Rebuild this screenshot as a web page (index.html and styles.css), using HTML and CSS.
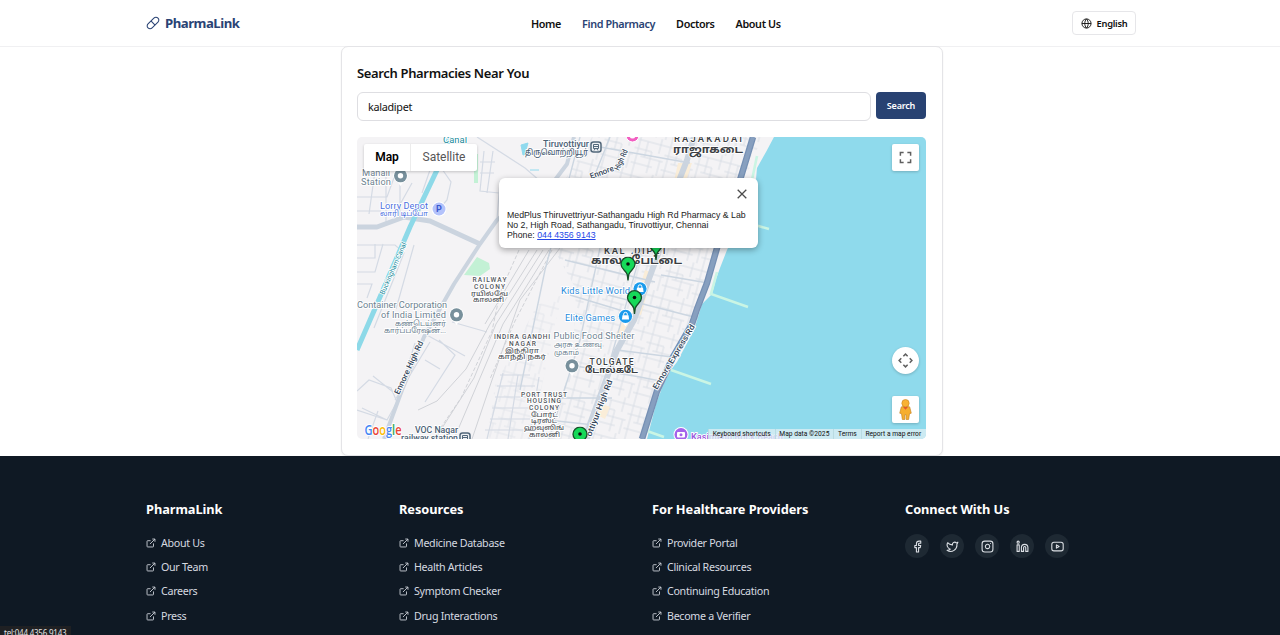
FILE: index.html
```html
<!DOCTYPE html>
<html lang="en">
<head>
<meta charset="utf-8">
<title>PharmaLink</title>
<link rel="stylesheet" href="styles.css">
</head>
<body>
<svg width="0" height="0" class="defs">
  <symbol id="ext" viewBox="0 0 24 24"><path d="M18 13v7a1.500 1.500 0 0 1-1.500 1.500H4A1.500 1.500 0 0 1 2.500 20V8A1.500 1.500 0 0 1 4 6.500h7M15 2.500h6.500V9M9.500 14.500l12-12"/></symbol>
  <symbol id="pin" viewBox="0 0 16 25"><path d="M8 24 7.200 18C6 14 1 12.500 1 7.700a7 7 0 0 1 14 0C15 12.500 10 14 8.800 18z" fill="#16d959" stroke="#174f29" stroke-width="1.300"/><circle cx="8" cy="7.500" r="1.800" fill="#0b0b0b"/></symbol>
  <symbol id="dot" viewBox="0 0 16 19"><path d="M8 18 5.500 14.500A7.300 7.300 0 1 1 10.500 14.500z" fill="#fff"/><circle cx="8" cy="7.800" r="6.500" fill="#78909c"/><circle cx="8" cy="7.800" r="2.700" fill="#fff"/></symbol>
  <symbol id="bag" viewBox="0 0 16 19"><path d="M8 18 5.500 14.500A7.300 7.300 0 1 1 10.500 14.500z" fill="#fff"/><circle cx="8" cy="7.800" r="6.600" fill="#1a9bec"/><path d="M5 6.800h6l.6 4.200H4.400z" fill="#fff"/><path d="M6.200 7V5.600a1.800 1.800 0 0 1 3.600 0V7" fill="none" stroke="#fff"/></symbol>
  <symbol id="train" viewBox="0 0 12 12"><rect x="1" y="1" width="10" height="10" rx="2.500" fill="#eef1f4" stroke="#52677a" stroke-width="1.500"/><path d="M3.500 3.500h5v4h-5zM3.500 5.500h5M4 9.500l1-1.500M8 9.500 7 8" fill="none" stroke="#52677a"/></symbol>
</svg>

<header class="header">
  <div class="container bar">
    <a class="brand"><svg class="pill" viewBox="0 0 24 24"><path d="m10.500 20.500 10-10a4.950 4.950 0 1 0-7-7l-10 10a4.950 4.950 0 1 0 7 7Z"/><path d="m8.500 8.500 7 7"/></svg><span>PharmaLink</span></a>
    <nav class="nav"><a>Home</a><a class="active">Find Pharmacy</a><a>Doctors</a><a>About Us</a></nav>
    <button class="lang"><svg viewBox="0 0 24 24"><circle cx="12" cy="12" r="10"/><path d="M2 12h20M12 2c-5 5-5 15 0 20M12 2c5 5 5 15 0 20"/></svg><span>English</span></button>
  </div>
</header>

<main class="card">
  <h1>Search Pharmacies Near You</h1>
  <div class="search"><div class="field">kaladipet</div><button class="go">Search</button></div>
  <section class="map">
    <svg class="tiles" viewBox="357 137 569 302">
      <defs>
        <pattern id="streets" width="31" height="37" patternUnits="userSpaceOnUse" patternTransform="rotate(15)">
          <path d="M0 6h31M0 15h18M8 22h23M0 30h22M4 0v37M12 6v16M18 15v22M25 0v15M28 22v15" fill="none" stroke="#d7dde4" stroke-width=".9"/>
        </pattern>
      </defs>
      <rect x="357" y="137" width="569" height="302" fill="#f4f3f5"/>
      <path d="M592 137h170l-20 50-30 80-18 50-36 60-20 62h-90l25-80 3-70-25-45 5-50z" fill="url(#streets)"/>
      <path d="M537 305l25-10-20 90-10 54h-45l8-54z" fill="url(#streets)" opacity=".65"/>
      <g fill="#faedd8"><path d="M678 163h14l-6 18h-12zM645 270l8 3-12 42-9-2zM600 403l10 4-5 12-10-5zM625 318l5 2-9 17-6-2z"/></g>
      <path d="M464 275 477 257 489 263 490 269 480 276Z M474 154h4v29h-4z" fill="#c3f1d5"/>
      <path d="M521 145l7-2-2 7 5 2-8 3zM530 170h9" fill="#90daee" stroke="#90daee"/>
      <g class="minor">
        <path d="M357 245h38l9 8-30 75M357 272h18l8-28M357 258h18v-14M357 284h15l-5 14M414 245l-18 64M357 197h30l8-22M375 171l-6 43M386 171v52M400 182v34M412 183l-14 25M357 211h24M430 170l-8 23M442 169l9 13-4 18-6 7M477 137l48 31 15 13M484 151l-4 40 19 2M493 151l-6 42M480 162h15M480 173h14M500 181l-3 38"/>
        <path d="M425 334 465 356M415 343l-17 55M430 342l-35 58M439 340l16 15-30 47M425 360l15 9M357 391l12-11 22 8 6 14-10 18-25-12M357 410l30 10M368 439l10-28M373 376l20 16M452 322l35 10M500 375h30M497 386h38M495 397h38M492 408h40M490 419h40M485 430h40M503 373l-16 66M518 375l-10 64M539 377l-10 62"/>
      </g>
      <g class="rail"><path d="M537 250 490 324 466 369 437 401 418 410M543 250 496 324 474 378 435 439M549 250 503 324 454 439M560 248 520 300 492 380 472 439M529 250 485 324"/><path d="M519 250 500 293 492 331 461 398 433 439M552 250 515 321 490 379" stroke-dasharray="4 2"/></g>
      <g class="mid"><path d="M580 137 545 270 520 390M600 248 580 340 549 439M610 137 594 177M565 260 655 282M570 295 633 314M608 295 725 325M570 365 640 377 665 382M617 350 672 357M665 183 727 196M600 147 690 163M661 275 708 283M560 398h52M548 420l46 5M652 200 642 248 588 439"/></g>
      <path class="road" stroke-width="5" d="M357 227h20l27-10 26 4 50 23"/>
      <path class="road" stroke-width="4" d="M574 137 567 164 555 180 524 197 497 220 480 244 454 284 424 337 402 390 384 439"/>
      <path class="road" stroke-width="6" d="M694 137 687 160 680 178 657 257 647 284 634 320 617 350 590 424 587 439"/>
      <path d="M450 137 437 170 410 227 377 304 357 350" stroke="#8dd9e8" stroke-width="5" fill="none"/>
      <path d="M774 137 766 152 757 168 755 190 742 220 727 250 720 268 716 279 712 294 702 304 694 330 677 362 670 371 662 388 656 404 647 439H926V137z" fill="#8fdaec"/>
      <path d="M757 156 752 180M717 272 711 294 748 307M671 370 711 384M647 431 664 437M755 225l14 4" fill="none" stroke="#caf5e4" stroke-width="2.600"/>
      <path d="M753 137 740 180 717 248 707 283 697 309 692 324 673 357 657 391 642 439" fill="none" stroke="#7690b4" stroke-width="6.500"/>
      <path d="M753 137 740 180 717 248 707 283 697 309 692 324 673 357 657 391 642 439" fill="none" stroke="#879fbf" stroke-width="4"/>

      <g class="lbl">
        <g class="canal"><text x="443" y="143" textLength="24" font-size="9.500">Canal</text><text transform="translate(384 295) rotate(-66)" textLength="56" lengthAdjust="spacingAndGlyphs" font-size="7">Buckingham Canal</text></g>
        <g class="poi"><text x="362" y="176" textLength="28">Manali</text><text x="361" y="185" textLength="30">Station</text>
          <text x="357" y="308" textLength="90" lengthAdjust="spacingAndGlyphs">Container Corporation</text><text x="381" y="317.500" textLength="65">of India Limited</text>
          <text x="395" y="326" textLength="51" lengthAdjust="spacingAndGlyphs" font-size="7.500">கண்டெய்னர்</text><text x="384" y="333" textLength="62" lengthAdjust="spacingAndGlyphs" font-size="7.500">கார்ப்பரேஷன்...</text>
          <text x="553.500" y="339" textLength="81">Public Food Shelter</text><text x="554" y="347" textLength="48" lengthAdjust="spacingAndGlyphs" font-size="7">அரசு உணவு</text><text x="554" y="355" textLength="25" lengthAdjust="spacingAndGlyphs" font-size="7">முகாம்</text></g>
        <g class="station"><text x="543" y="147" textLength="46" lengthAdjust="spacingAndGlyphs">Tiruvottiyur</text><text x="525" y="155" textLength="63" lengthAdjust="spacingAndGlyphs" font-size="8.500">திருவொற்றியூர்</text><text x="415" y="433" textLength="43" lengthAdjust="spacingAndGlyphs">VOC Nagar</text><text x="401" y="441" textLength="57" lengthAdjust="spacingAndGlyphs">railway station</text></g>
        <g class="shop"><text x="561" y="293.500" textLength="69">Kids Little World</text><text x="565" y="321" textLength="50">Elite Games</text></g>
        <g class="depot"><text x="380" y="209" textLength="48">Lorry Depot</text><text x="380" y="216" textLength="48" lengthAdjust="spacingAndGlyphs" font-size="7.500">லாரி டிப்போ</text></g>
        <g class="area"><text x="472.500" y="282" textLength="34">RAILWAY</text><text x="474" y="289" textLength="31">COLONY</text><text x="471" y="295.500" textLength="37" lengthAdjust="spacingAndGlyphs">ரயில்வே</text><text x="473" y="302" textLength="31" lengthAdjust="spacingAndGlyphs">காலனி</text>
          <text x="494" y="338.500" textLength="56">INDIRA GANDHI</text><text x="509" y="345.500" textLength="27">NAGAR</text><text x="505" y="352.500" textLength="34" lengthAdjust="spacingAndGlyphs">இந்திரா</text><text x="498" y="359" textLength="48" lengthAdjust="spacingAndGlyphs">காந்தி நகர்</text>
          <text x="521" y="396.500" textLength="46">PORT TRUST</text><text x="527" y="403.300" textLength="34">HOUSING</text><text x="529" y="410" textLength="30">COLONY</text><text x="531" y="416.500" textLength="27" lengthAdjust="spacingAndGlyphs">போர்ட்</text><text x="531" y="423" textLength="26" lengthAdjust="spacingAndGlyphs">டிரஸ்ட்</text><text x="524" y="430" textLength="40" lengthAdjust="spacingAndGlyphs">ஹவுஸிங்</text><text x="529" y="437" textLength="31" lengthAdjust="spacingAndGlyphs">காலனி</text></g>
        <g class="town"><text x="674" y="142" textLength="68">RAJAKADAI</text><text class="ta" x="673" y="152.500" textLength="70" lengthAdjust="spacingAndGlyphs" font-size="11">ராஜாகடை</text>
          <text x="604" y="254" textLength="63">KALADIPET</text><text class="ta" x="591" y="263.500" textLength="91" lengthAdjust="spacingAndGlyphs" font-size="11">காலடிபேட்டை</text>
          <text x="589.500" y="364.500" textLength="44" font-size="8.500">TOLGATE</text><text class="ta" x="585" y="373" textLength="53" lengthAdjust="spacingAndGlyphs" font-size="9">டோல்கடே</text></g>
        <g class="street"><text transform="translate(591 179) rotate(-20)" textLength="25" lengthAdjust="spacingAndGlyphs">Ennore</text><text transform="translate(619 171) rotate(-66)" textLength="22" lengthAdjust="spacingAndGlyphs">High Rd</text><text transform="translate(399 395) rotate(-65)" textLength="58" lengthAdjust="spacingAndGlyphs">Ennore High Rd</text><text transform="translate(591 437) rotate(-69)" textLength="60" lengthAdjust="spacingAndGlyphs">ottiyur High Rd</text><text transform="translate(657 390) rotate(-59)" textLength="74" lengthAdjust="spacingAndGlyphs">Ennore Express Rd</text></g>
        <text class="beach" x="691" y="439.500" textLength="92">Kasimedu Rock Beach</text>
      </g>
      <use href="#dot" x="392.500" y="168" width="16" height="19"/><use href="#dot" x="448.500" y="307" width="16" height="19"/><use href="#dot" x="564" y="358" width="16" height="19"/>
      <circle cx="439" cy="209" r="7.500" fill="#fff"/><circle cx="439" cy="209" r="6.500" fill="#b3c2fb"/><text class="p" x="439" y="212.300">P</text>
      <use href="#train" x="590" y="141" width="12" height="12"/><use href="#train" x="459" y="432" width="12" height="12"/>
      <circle cx="632.500" cy="135.500" r="6.500" fill="#f25ec1" stroke="#fff"/><circle cx="632.500" cy="135.500" r="3" fill="#fff"/>
      <circle cx="681" cy="434.500" r="7.500" fill="#fff"/><circle cx="681" cy="434.500" r="6.500" fill="#a463ea"/><rect x="677" y="432" width="8" height="5.500" rx="1" fill="#fff"/><circle cx="681" cy="434.700" r="1.500" fill="#a463ea"/>
      <use href="#bag" x="632" y="281" width="16" height="19"/><use href="#bag" x="617.500" y="308.500" width="16" height="19"/>
      <use href="#pin" x="648" y="236" width="16" height="25"/><use href="#pin" x="572" y="426.500" width="16" height="25"/><use href="#pin" x="626.500" y="290" width="16" height="25"/>
      <path d="M620 247h16l-8 11z" fill="#fff"/>
      <use href="#pin" x="620" y="256.500" width="16" height="25"/>
      <text class="google" x="364.500" y="434.500" textLength="37" lengthAdjust="spacingAndGlyphs"><tspan fill="#4285f4">G</tspan><tspan fill="#ea4335">o</tspan><tspan fill="#fbbc05">o</tspan><tspan fill="#4285f4">g</tspan><tspan fill="#34a853">l</tspan><tspan fill="#ea4335">e</tspan></text>
    </svg>
    <div class="types"><span class="on">Map</span><span>Satellite</span></div>
    <div class="ctl full"><svg viewBox="0 0 14 14"><path d="M1.500 5V1.500H5M9 1.500h3.500V5M12.500 9v3.500H9M5 12.500H1.500V9"/></svg></div>
    <div class="ctl pan"><svg viewBox="0 0 16 16"><path d="M5.700 3.500 8 1.200l2.300 2.300M5.700 12.500 8 14.800l2.300-2.300M3.500 5.700 1.200 8l2.300 2.300M12.500 5.700 14.800 8l-2.300 2.300"/></svg></div>
    <div class="ctl peg"><svg viewBox="0 0 12 20"><path d="M2 7.500Q6 6 10 7.500l1.500 6-1.700.5L9 19.500H6.600V15H5.400v4.500H3L2.200 14 .5 13.500z" fill="#f6ae2d" stroke="#c17f20" stroke-width=".6"/><path d="m3.500 7.300 2.500 3 2.500-3z" fill="#e4572e"/><circle cx="6" cy="4" r="3.500" fill="#f9b233" stroke="#ca8624" stroke-width=".6"/></svg></div>
    <div class="popup">
      <svg class="x" viewBox="0 0 10 10"><path d="m.7.7 8.600 8.600M9.300.7.7 9.300"/></svg>
      <p>MedPlus Thiruvettriyur-Sathangadu High Rd Pharmacy &amp; Lab<br>No 2, High Road, Sathangadu, Tiruvottiyur, Chennai<br>Phone: <a href="#">044 4356 9143</a></p>
    </div>
    <div class="credits"><span>Keyboard shortcuts</span><span>Map data ©2025</span><span>Terms</span><span>Report a map error</span></div>
  </section>
</main>

<footer class="footer">
  <div class="container cols">
    <div><h2>PharmaLink</h2><ul><li><svg><use href="#ext"/></svg>About Us</li><li><svg><use href="#ext"/></svg>Our Team</li><li><svg><use href="#ext"/></svg>Careers</li><li><svg><use href="#ext"/></svg>Press</li></ul></div>
    <div><h2>Resources</h2><ul><li><svg><use href="#ext"/></svg>Medicine Database</li><li><svg><use href="#ext"/></svg>Health Articles</li><li><svg><use href="#ext"/></svg>Symptom Checker</li><li><svg><use href="#ext"/></svg>Drug Interactions</li></ul></div>
    <div><h2>For Healthcare Providers</h2><ul><li><svg><use href="#ext"/></svg>Provider Portal</li><li><svg><use href="#ext"/></svg>Clinical Resources</li><li><svg><use href="#ext"/></svg>Continuing Education</li><li><svg><use href="#ext"/></svg>Become a Verifier</li></ul></div>
    <div><h2>Connect With Us</h2>
      <div class="social">
        <a><svg viewBox="0 0 24 24"><path d="M18 2h-3a5 5 0 0 0-5 5v3H7v4h3v8h4v-8h3l1-4h-4V7a1 1 0 0 1 1-1h3z"/></svg></a>
        <a><svg viewBox="0 0 24 24"><path d="M22 4s-.7 2.100-2 3.400c1.600 10-9.400 17.300-18 11.600 2.200.1 4.400-.6 6-2C3 15.500.5 9.600 3 5c2.200 2.600 5.600 4.100 9 4-.9-4.200 4-6.600 7-3.800 1.100 0 3-1.200 3-1.200z"/></svg></a>
        <a><svg viewBox="0 0 24 24"><rect x="2" y="2" width="20" height="20" rx="5"/><path d="M16 11.370A4 4 0 1 1 12.630 8 4 4 0 0 1 16 11.370zM17.500 6.500h.01"/></svg></a>
        <a><svg viewBox="0 0 24 24"><path d="M16 8a6 6 0 0 1 6 6v7h-4v-7a2 2 0 0 0-4 0v7h-4v-7a6 6 0 0 1 6-6z"/><rect x="2" y="9" width="4" height="12"/><circle cx="4" cy="4" r="2"/></svg></a>
        <a><svg viewBox="0 0 24 24"><rect x="1.500" y="4" width="21" height="16" rx="4"/><path d="m10 9 5 3-5 3z"/></svg></a>
      </div>
    </div>
  </div>
</footer>
<div class="status">tel:044 4356 9143</div>
</body>
</html>
```

FILE: styles.css
```css
* { box-sizing: border-box; }
body { margin: 0; height: 635px; overflow: hidden; background: #fff; color: #111; font-family: "Noto Sans", "Open Sans", sans-serif; }
.defs { position: absolute; }
button { font-family: inherit; }
.container { width: 988px; margin: 0 auto; }
.header { height: 47px; border-bottom: 1px solid #f0f0f2; }
.bar { width: 990px; padding-left: 1px; height: 46px; display: flex; align-items: center; }
.brand { display: flex; align-items: center; gap: 5px; width: 385px; color: #2a4374; font-weight: 700; font-size: 13.2px; letter-spacing: -.5px; }
.pill { width: 14px; height: 14px; fill: none; stroke: #2a4374; stroke-width: 1.8; }
.nav { display: flex; gap: 21px; font-size: 10.8px; font-weight: 600; letter-spacing: -.37px; }
.active { color: #2a4374; }
.lang { width: 64px; height: 24px; margin-left: auto; margin-right: -1px; padding: 0; display: flex; align-items: center; justify-content: center; gap: 5px; border: 1px solid #e6e6e9; border-radius: 4px; background: #fff; color: #111; font-size: 9.3px; font-weight: 600; letter-spacing: -.25px; }
.lang svg { width: 11px; height: 11px; fill: none; stroke: #111; stroke-width: 2; }

.card { width: 602px; height: 410px; margin: -1px 0 0 341px; padding: 16px 16px 0 15px; background: #fff; border: 1px solid #e4e4e7; border-radius: 7px; box-shadow: 0 1px 2px #0001; }
.card h1 { margin: 0; height: 29px; line-height: 20px; font-size: 13px; font-weight: 600; letter-spacing: -.35px; }
.search { display: flex; gap: 5px; height: 29px; }
.field { width: 514px; border: 1px solid #dedee2; border-radius: 6px; padding-left: 10px; line-height: 27px; font-size: 10.8px; letter-spacing: -.3px; }
.go { width: 50px; height: 27px; border: 0; border-radius: 4px; padding: 0; background: #284272; color: #fff; font-size: 9px; font-weight: 600; letter-spacing: -.2px; }
.map { position: relative; width: 569px; height: 302px; margin-top: 16px; overflow: hidden; border-radius: 5px; font-family: Roboto, sans-serif; }
.tiles { display: block; width: 569px; height: 302px; }
.minor, .rail, .mid, .road { fill: none; }
.minor { stroke: #d4dae4; stroke-width: 1.2; }
.rail { stroke: #d0d2d7; stroke-width: 1; }
.mid { stroke: #ccd6e1; stroke-width: 1.4; }
.road { stroke: #cbd4df; stroke-linejoin: round; }
.lbl { font-family: Roboto, "Noto Sans Tamil", "Noto Sans", sans-serif; }
.lbl text, .google { stroke: #fff; stroke-width: 1.8px; paint-order: stroke; stroke-linejoin: round; }
.canal { fill: #16899a; }
.poi { fill: #6d8290; font-size: 9.3px; }
.station { fill: #4a6074; font-size: 9px; font-weight: 500; }
.shop { fill: #298bdb; font-size: 9.3px; }
.depot { fill: #4b70e0; font-size: 9.3px; }
.area { fill: #52565c; font-size: 6.6px; font-weight: 500; }
.town { fill: #3b3e43; font-size: 9.5px; font-weight: 500; }
.town .ta { font-weight: 700; }
.street { fill: #35475b; font-size: 8px; font-weight: 500; }
.lbl .beach { fill: #9955dc; font-size: 9.3px; font-weight: 500; }
.p { fill: #3b59cf; font-size: 9px; font-weight: 700; text-anchor: middle; }
.google { font-family: "Open Sans", sans-serif; font-size: 13.5px; font-weight: 600; }
.types { position: absolute; left: 7px; top: 7px; width: 113px; height: 27px; display: flex; align-items: center; background: #fff; border-radius: 2px; box-shadow: 0 1px 3px #0003; color: #565656; font-size: 12px; }
.types span { flex: 1; text-align: center; line-height: 27px; }
.types .on { flex: 0 0 47px; border-right: 1px solid #ececec; color: #000; font-weight: 600; }
.ctl { position: absolute; left: 535px; width: 27px; height: 27px; display: grid; place-items: center; background: #fff; border-radius: 2px; box-shadow: 0 1px 3px #0003; }
.ctl svg { fill: none; stroke: #5f5f5f; stroke-width: 1.6; }
.full { top: 7px; } .full svg { width: 13px; height: 13px; }
.pan { top: 210px; border-radius: 50%; } .pan svg { width: 15px; height: 15px; }
.peg { top: 259px; } .peg svg { width: 13px; height: 21px; stroke: none; }
.popup { position: absolute; left: 142px; top: 41px; width: 259px; height: 70px; background: #fff; border-radius: 6px; box-shadow: 0 2px 6px #0005; }
.popup p { margin: 0; padding: 32px 0 0 8px; font: 8.75px/10.2px "Liberation Sans", sans-serif; color: #222; white-space: nowrap; }
.popup a { color: #2547e8; }
.x { position: absolute; left: 238px; top: 11px; width: 10px; height: 10px; stroke: #4c4c4c; stroke-width: 1.3; }
.credits { position: absolute; right: 0; bottom: 0; height: 10px; display: flex; background: #dceff3c8; color: #111; font-size: 6.7px; line-height: 10px; white-space: nowrap; }
.credits span { padding: 0 3.8px; border-left: 1px solid #b9dbe2; }
.credits span:last-child { padding-right: 4.8px; }

.footer { height: 179px; padding-top: 43px; background: #0f1924; color: #d6dae0; }
.cols { display: grid; grid-template-columns: repeat(4, 231px); gap: 22px; }
.footer h2 { margin: 0; line-height: 21px; font-size: 12.8px; font-weight: 700; letter-spacing: -.06px; color: #fff; white-space: nowrap; }
.footer ul { list-style: none; margin: 10.5px 0 0; padding: 0; }
.footer li { display: flex; align-items: center; gap: 5px; height: 24.3px; font-size: 10.7px; letter-spacing: -.3px; white-space: nowrap; }
.footer li svg { width: 10px; height: 10px; fill: none; stroke: #c8cdd4; stroke-width: 2.2; }
.social { display: flex; gap: 11px; margin-top: 14px; }
.social a { width: 24px; height: 24px; border-radius: 50%; background: #1e2933; display: grid; place-items: center; }
.social svg { width: 13px; height: 13px; fill: none; stroke: #dce0e5; stroke-width: 2; stroke-linecap: round; stroke-linejoin: round; }
.status { position: absolute; left: 0; top: 626px; width: 71px; height: 9px; overflow: hidden; background: #1f2023; color: #e2e2e2; padding-left: 4px; font-size: 8px; line-height: 13px; letter-spacing: -.22px; white-space: nowrap; }
```
